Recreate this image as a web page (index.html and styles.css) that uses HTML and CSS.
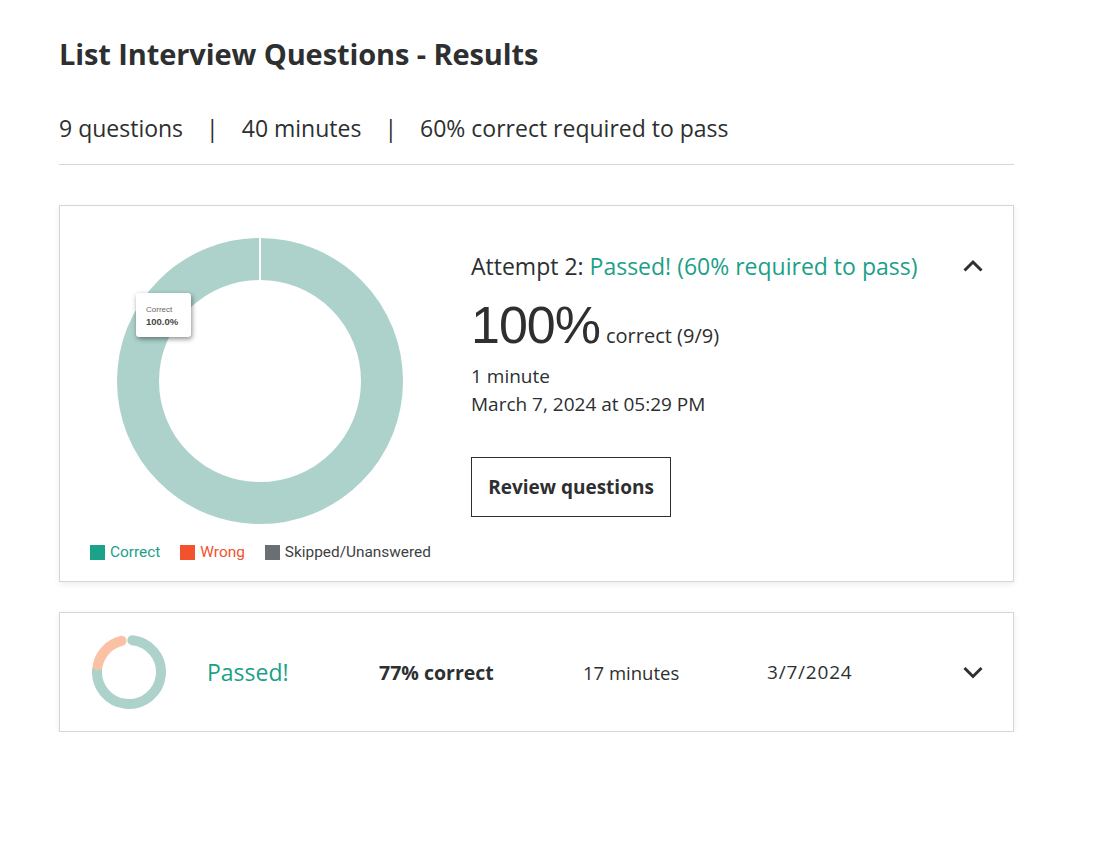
FILE: index.html
```html
<!DOCTYPE html>
<html lang="en">
<head>
<meta charset="utf-8">
<title>List Interview Questions - Results</title>
<link rel="stylesheet" href="styles.css">
</head>
<body>
<main class="page">
  <h1 class="title">List Interview Questions - Results</h1>
  <div class="meta">
    <span>9 questions</span><span class="sep">|</span><span>40 minutes</span><span class="sep">|</span><span>60% correct required to pass</span>
  </div>
  <hr class="divider">

  <section class="card attempt-open">
    <div class="chart-col">
      <div class="chart-wrap">
        <svg class="donut" width="286" height="286" viewBox="0 0 286 286">
          <circle cx="143" cy="143" r="122" fill="none" stroke="#acd2cb" stroke-width="42"/>
          <line x1="143" y1="0" x2="143" y2="43" stroke="#ffffff" stroke-width="2"/>
        </svg>
        <div class="tooltip">
          <div class="tt-label">Correct</div>
          <div class="tt-value">100.0%</div>
        </div>
      </div>
      <ul class="legend">
        <li class="lg-correct"><span class="swatch"></span>Correct</li>
        <li class="lg-wrong"><span class="swatch"></span>Wrong</li>
        <li class="lg-skipped"><span class="swatch"></span>Skipped/Unanswered</li>
      </ul>
    </div>
    <div class="info-col">
      <div class="attempt-head">
        <div class="attempt-title">Attempt 2: <span class="pass">Passed! (60% required to pass)</span></div>
        <svg class="chev" width="24" height="24" viewBox="0 0 24 24"><path d="M3.5 16.5 L12 8 L20.5 16.5" fill="none" stroke="#2d2f31" stroke-width="3"/></svg>
      </div>
      <div class="score"><span class="big">100%</span><span class="score-sub">correct (9/9)</span></div>
      <div class="detail first">1 minute</div>
      <div class="detail">March 7, 2024 at 05:29 PM</div>
      <button class="review-btn">Review questions</button>
    </div>
  </section>

  <section class="card attempt-row">
    <svg class="mini-donut" width="76" height="76" viewBox="0 0 76 76">
      <circle cx="38" cy="38" r="32" fill="none" stroke="#acd2cb" stroke-width="10" stroke-linecap="round"
        stroke-dasharray="150 201.06" transform="rotate(-84 38 38)"/>
      <circle cx="38" cy="38" r="32" fill="none" stroke="#fbc1a5" stroke-width="10" stroke-linecap="round"
        stroke-dasharray="36 201.06" transform="rotate(192 38 38)"/>
    </svg>
    <div class="row-pass">Passed!</div>
    <div class="row-score">77% correct</div>
    <div class="row-time">17 minutes</div>
    <div class="row-date">3/7/2024</div>
    <svg class="chev" width="24" height="24" viewBox="0 0 24 24"><path d="M3.5 8 L12 16.5 L20.5 8" fill="none" stroke="#2d2f31" stroke-width="3"/></svg>
  </section>
</main>
</body>
</html>
```
FILE: styles.css
```css
* { box-sizing: border-box; }
html, body { margin: 0; padding: 0; background: #ffffff; }
body {
  font-family: "Open Sans", "Liberation Sans", sans-serif;
  color: #2d2f31;
}
.page {
  width: 955px;
  margin-left: 59px;
  padding-top: 36px;
}
.title {
  margin: 0;
  font-size: 29px;
  font-weight: 700;
  line-height: 36px;
  letter-spacing: -0.1px;
}
.meta {
  margin-top: 40px;
  font-size: 23px;
  line-height: 32px;
  display: flex;
}
.sep { margin: 0 23px; }
.divider {
  margin: 20px 0 0 0;
  border: 0;
  border-top: 1px solid #d1d7dc;
}
.card {
  background: #ffffff;
  border: 1px solid #d1d7dc;
  box-shadow: 0 2px 6px rgba(0,0,0,0.08);
}
.attempt-open {
  margin-top: 40px;
  display: flex;
  height: 377px;
}
.chart-col {
  width: 411px;
  padding: 32px 0 0 30px;
  display: flex;
  flex-direction: column;
}
.chart-wrap {
  position: relative;
  width: 286px;
  height: 286px;
  margin-left: 27px;
}
.donut { display: block; }
.tooltip {
  position: absolute;
  left: 19px;
  top: 55px;
  width: 55px;
  height: 44px;
  background: #ffffff;
  border-radius: 3px;
  box-shadow: 1px 2px 5px rgba(0,0,0,0.45);
  font-family: "Liberation Sans", Arial, sans-serif;
  padding: 11px 0 0 10px;
}
.tt-label { font-size: 8px; color: #666666; line-height: 11px; }
.tt-value { font-size: 9.5px; color: #444444; font-weight: 700; line-height: 13px; }
.legend {
  list-style: none;
  margin: 19px 0 0 0;
  padding: 0;
  display: flex;
  gap: 20px;
  font-family: "Roboto", "Liberation Sans", sans-serif;
  font-size: 15.4px;
  line-height: 18px;
}
.legend li { display: flex; align-items: center; }
.swatch { width: 15px; height: 15px; margin-right: 5px; display: inline-block; }
.lg-correct { color: #1c9f88; }
.lg-correct .swatch { background: #1ba38a; }
.lg-wrong { color: #f4522d; }
.lg-wrong .swatch { background: #f4522d; }
.lg-skipped { color: #3e4143; }
.lg-skipped .swatch { background: #6a6f73; }

.info-col {
  flex: 1;
  padding: 46px 28px 0 0;
}
.attempt-head {
  display: flex;
  align-items: center;
  justify-content: space-between;
}
.attempt-title { font-size: 23px; line-height: 28px; }
.pass { color: #1c9f88; }
.score {
  margin-top: 16px;
  display: flex;
  align-items: baseline;
}
.big { font-family: "Liberation Sans", Arial, sans-serif; font-size: 52px; line-height: 58px; letter-spacing: -1px; }
.score-sub { font-size: 20px; margin-left: 6px; }
.detail { font-size: 19px; line-height: 28px; }
.detail.first { margin-top: 8px; }
.review-btn {
  margin-top: 39px;
  display: block;
  width: 200px;
  height: 60px;
  background: #ffffff;
  border: 1px solid #2d2f31;
  font-family: inherit;
  font-size: 19px;
  font-weight: 700;
  color: #2d2f31;
  padding: 0;
}
.attempt-row {
  margin-top: 30px;
  height: 120px;
  display: flex;
  align-items: center;
  padding: 0 28px 0 31px;
}
.mini-donut { display: block; flex: none; }
.row-pass { width: 172px; margin-left: 40px; font-size: 23px; color: #1c9f88; }
.row-score { width: 204px; font-size: 19.5px; font-weight: 700; }
.row-time { width: 184px; font-size: 18.5px; }
.row-date { flex: 1; font-size: 19px; letter-spacing: 0.8px; }
.chev { flex: none; display: block; }
```
